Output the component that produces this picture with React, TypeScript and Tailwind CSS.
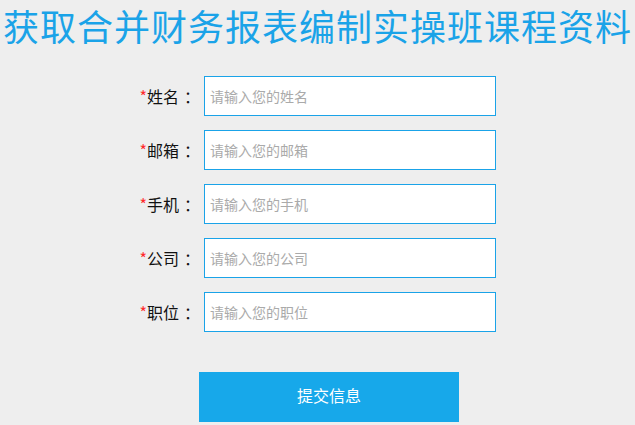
import React from 'react';

const fields = [
  { label: '姓名', placeholder: '请输入您的姓名' },
  { label: '邮箱', placeholder: '请输入您的邮箱' },
  { label: '手机', placeholder: '请输入您的手机' },
  { label: '公司', placeholder: '请输入您的公司' },
  { label: '职位', placeholder: '请输入您的职位' },
];

const font = { fontFamily: '"Noto Sans CJK SC", "Noto Sans", sans-serif' };

export default function App() {
  return (
    <div className="w-[635px] h-[425px] bg-[#eeeeee] overflow-hidden" style={font}>
      <h1 className="pt-[5px] pl-[3px] text-[36px] tracking-[1px] leading-[40px] text-[#1aa3e8] whitespace-nowrap">
        获取合并财务报表编制实操班课程资料
      </h1>
      <form className="mt-[31px] flex flex-col gap-[14px]">
        {fields.map((f) => (
          <div key={f.label} className="flex items-center">
            <label className="w-[204px] pr-[4px] text-right text-[16px] text-[#111]">
              <span className="text-[#ff2a2a]">*</span>
              {f.label}
              <span className="ml-[5px]">：</span>
            </label>
            <input
              type="text"
              placeholder={f.placeholder}
              className="w-[292px] h-[40px] border border-[#1aa3e8] bg-white px-[5px] text-[14px] text-[#333] placeholder:text-[#aaaaaa] outline-none"
            />
          </div>
        ))}
      </form>
      <div className="mt-[40px] pl-[199px]">
        <button className="w-[260px] h-[50px] pb-[5px] bg-[#17a8ea] text-white text-[16px]">
          提交信息
        </button>
      </div>
    </div>
  );
}
